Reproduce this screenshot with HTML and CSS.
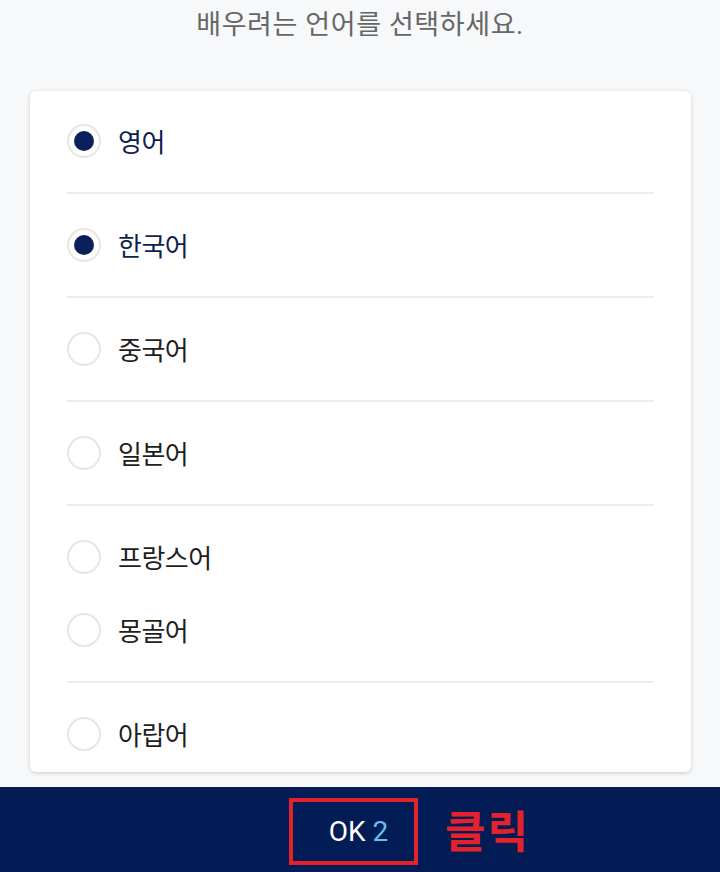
FILE: index.html
```html
<!DOCTYPE html>
<html lang="ko">
<head>
<meta charset="utf-8">
<link rel="stylesheet" href="styles.css">
</head>
<body>
<div class="page">
  <h1 class="title">배우려는 언어를 선택하세요.</h1>
  <div class="card">
    <label class="item selected"><span class="radio"><span class="dot"></span></span><span class="label">영어</span></label>
    <div class="divider"></div>
    <label class="item selected"><span class="radio"><span class="dot"></span></span><span class="label">한국어</span></label>
    <div class="divider"></div>
    <label class="item"><span class="radio"></span><span class="label">중국어</span></label>
    <div class="divider"></div>
    <label class="item"><span class="radio"></span><span class="label">일본어</span></label>
    <div class="divider"></div>
    <label class="item"><span class="radio"></span><span class="label">프랑스어</span></label>
    <label class="item"><span class="radio"></span><span class="label">몽골어</span></label>
    <div class="divider"></div>
    <label class="item"><span class="radio"></span><span class="label">아랍어</span></label>
  </div>
  <div class="bar">
    <div class="ok-box"><span class="ok">OK</span> <span class="count">2</span></div>
    <span class="click">클릭</span>
  </div>
</div>
</body>
</html>
```
FILE: styles.css
```css
* { box-sizing: border-box; }
html, body {
  margin: 0;
  padding: 0;
  background: #f7f8fa;
  font-family: Roboto, "Noto Sans CJK KR", "Noto Sans", sans-serif;
}
.page {
  width: 720px;
  height: 872px;
  display: flex;
  flex-direction: column;
  overflow: hidden;
}
.title {
  margin: 0;
  height: 91px;
  padding-top: 6px;
  text-align: center;
  font-size: 27px;
  font-weight: 400;
  color: #666;
  letter-spacing: 0.6px;
  line-height: 38px;
}
.card {
  margin: 0 29px 0 30px;
  background: #fff;
  border-radius: 6px;
  box-shadow: 0 1px 4px rgba(0,0,0,0.18);
  padding: 13px 37px 2px 37px;
  height: 681px;
}
.item {
  display: flex;
  align-items: center;
  height: 73px;
  gap: 17px;
}
.radio {
  width: 34px;
  height: 34px;
  border-radius: 50%;
  border: 2px solid #e6e6e6;
  background: #fff;
  display: flex;
  align-items: center;
  justify-content: center;
  flex: none;
}
.dot {
  width: 20px;
  height: 20px;
  border-radius: 50%;
  background: #0b1f5a;
}
.label {
  font-size: 26px;
  color: #1e1e1e;
  letter-spacing: -0.5px;
}
.selected .label { color: #0e1f4f; }
.divider {
  height: 2px;
  background: #ededed;
  margin: 15px 0 14px;
}
.bar {
  margin-top: 15px;
  flex: 1;
  background: #031c56;
  display: flex;
  align-items: center;
  padding-left: 289px;
}
.ok-box {
  width: 129px;
  height: 67px;
  border: 4px solid #e3222c;
  display: flex;
  align-items: center;
  justify-content: center;
  font-size: 28px;
  gap: 7px;
  padding-left: 10px;
  margin-top: 3px;
}
.ok { color: #fff; }
.count { color: #5ec3f0; }
.click {
  margin-left: 27px;
  font-size: 44px;
  font-weight: 700;
  color: #e3222c;
  letter-spacing: 2px;
  font-family: "Noto Sans CJK KR", sans-serif;
  margin-top: -1px;
}
```
